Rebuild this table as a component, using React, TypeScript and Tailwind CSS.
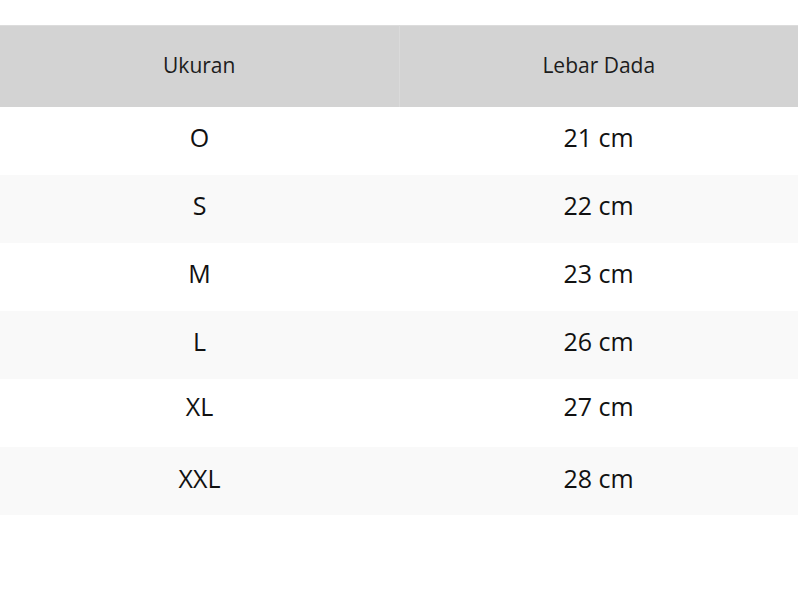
import React from 'react';

const rows = [
	{ size: 'O', chest: '21 cm', pad: 'pb-[6px]' },
	{ size: 'S', chest: '22 cm', pad: 'pb-[6px]' },
	{ size: 'M', chest: '23 cm', pad: 'pb-[6px]' },
	{ size: 'L', chest: '26 cm', pad: 'pb-[6px]' },
	{ size: 'XL', chest: '27 cm', pad: 'pb-[12px]' },
	{ size: 'XXL', chest: '28 cm', pad: 'pb-[4px]' },
];

const App = () => {
	return (
		<div className="w-[800px] h-[608px] bg-white pt-[25px] font-['Open_Sans',sans-serif]">
			<table className="w-[798px] table-fixed border-collapse">
				<thead>
					<tr className="bg-[#d3d3d3] h-[81px] border-t border-[#dcdcdc]">
						<th className="w-1/2 pb-[2px] text-center font-normal text-[21px] text-[#1c1c1c] border-r border-[#dadada]">
							Ukuran
						</th>
						<th className="w-1/2 pb-[2px] text-center font-normal text-[21px] text-[#1c1c1c]">
							Lebar Dada
						</th>
					</tr>
				</thead>
				<tbody>
					{rows.map((row, i) => {
						return (
							<tr
								key={row.size}
								className={
									i % 2 === 0 ? 'bg-white h-[68px]' : 'bg-[#f9f9f9] h-[68px]'
								}
							>
								<td className={'p-0 text-center text-[25px] text-[#111] ' + row.pad}>
									{row.size}
								</td>
								<td className={'p-0 text-center text-[25px] text-[#111] ' + row.pad}>
									{row.chest}
								</td>
							</tr>
						);
					})}
				</tbody>
			</table>
		</div>
	);
};

export default App;
